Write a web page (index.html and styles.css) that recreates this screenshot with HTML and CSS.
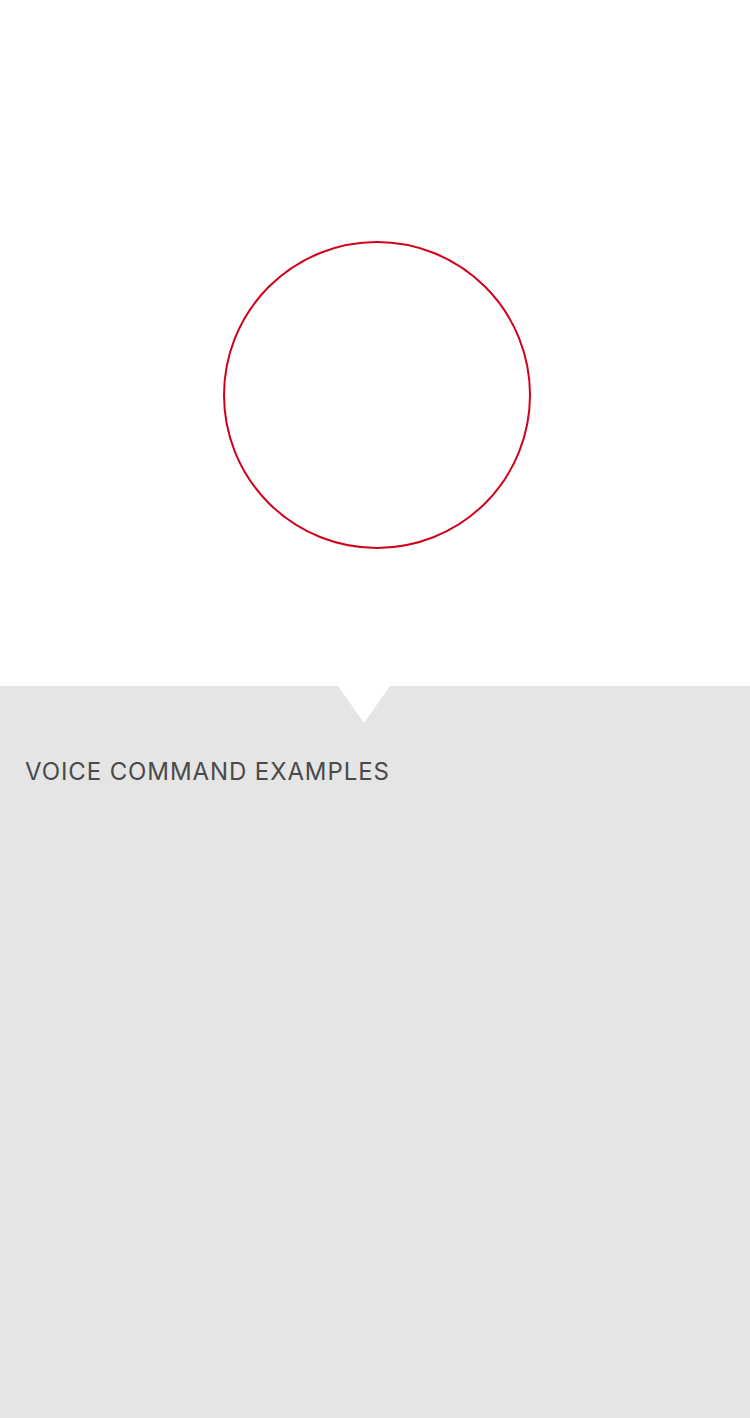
FILE: index.html
```html
<!DOCTYPE html>
<html>
<head>
<meta charset="utf-8">
<link rel="stylesheet" href="styles.css">
</head>
<body>
<div class="screen">
  <section class="listen">
    <div class="ring"></div>
  </section>
  <section class="panel">
    <div class="notch"></div>
    <h2 class="title">VOICE COMMAND EXAMPLES</h2>
  </section>
</div>
</body>
</html>
```
FILE: styles.css
```css
html, body {
  margin: 0;
  padding: 0;
  background: #e5e5e5;
}
.screen {
  width: 750px;
  height: 1418px;
  display: flex;
  flex-direction: column;
  font-family: "Inter", "Roboto", "Liberation Sans", sans-serif;
}
.listen {
  height: 686px;
  background: #ffffff;
  box-sizing: border-box;
  padding-top: 241px;
  padding-left: 223px;
}
.ring {
  width: 308px;
  height: 308px;
  box-sizing: border-box;
  border: 2px solid #d0021b;
  border-radius: 50%;
}
.panel {
  flex: 1;
  position: relative;
  background: #e5e5e5;
  padding: 0 25px;
}
.notch {
  position: absolute;
  top: 0;
  left: 338px;
  width: 0;
  height: 0;
  border-left: 26px solid transparent;
  border-right: 26px solid transparent;
  border-top: 37px solid #ffffff;
}
.title {
  margin: 0;
  padding-top: 70px;
  font-size: 24px;
  line-height: 32px;
  font-weight: 400;
  color: #4a4a4a;
  letter-spacing: 0.9px;
}
```
